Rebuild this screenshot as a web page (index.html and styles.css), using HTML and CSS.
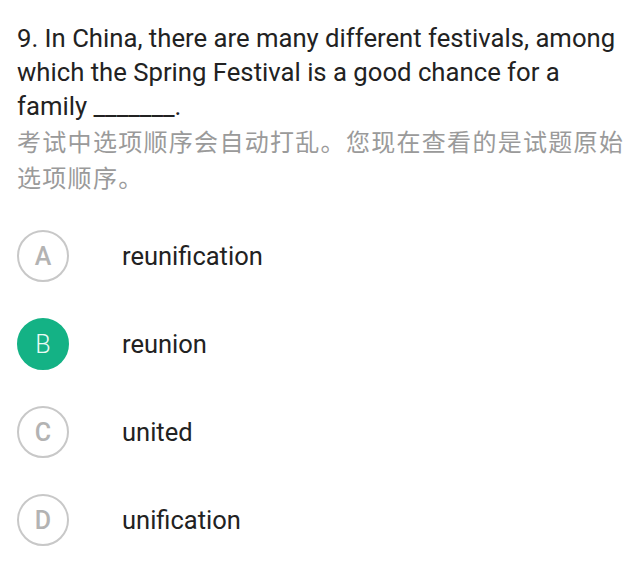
FILE: index.html
```html
<!DOCTYPE html>
<html lang="zh">
<head>
<meta charset="utf-8">
<link rel="stylesheet" href="styles.css">
</head>
<body>
<div class="page">
  <div class="question">9. In China, there are many different festivals, among which the Spring Festival is a good chance for a family _______.</div>
  <div class="note">考试中选项顺序会自动打乱。您现在查看的是试题原始选项顺序。</div>
  <ul class="options">
    <li class="option"><span class="badge">A</span><span class="text">reunification</span></li>
    <li class="option"><span class="badge selected">B</span><span class="text">reunion</span></li>
    <li class="option"><span class="badge">C</span><span class="text">united</span></li>
    <li class="option"><span class="badge">D</span><span class="text">unification</span></li>
  </ul>
</div>
</body>
</html>
```
FILE: styles.css
```css
html, body {
  margin: 0;
  padding: 0;
  background: #ffffff;
}
.page {
  padding: 21px 8px 0 17px;
  font-family: Roboto, "Noto Sans CJK SC", sans-serif;
}
.question {
  font-size: 25.7px;
  line-height: 34px;
  color: #222222;
  padding-right: 8px;
}
.note {
  font-family: "Noto Sans CJK SC", sans-serif;
  font-size: 24px;
  line-height: 36px;
  letter-spacing: 1.3px;
  color: #9a9a9a;
}
.options {
  list-style: none;
  margin: 17px 0 0 0;
  padding: 0;
}
.option {
  height: 88px;
  display: flex;
  align-items: center;
  gap: 53px;
}
.badge {
  box-sizing: border-box;
  width: 52px;
  height: 52px;
  border-radius: 50%;
  border: 2px solid #c8c8c8;
  display: flex;
  align-items: center;
  justify-content: center;
  font-size: 25px;
  color: #b3b3b3;
  font-weight: 500;
}
.badge.selected {
  background: #14b285;
  border-color: #14b285;
  color: #e9fbf4;
  font-weight: 300;
}
.text {
  font-size: 25.5px;
  color: #222222;
}
```
